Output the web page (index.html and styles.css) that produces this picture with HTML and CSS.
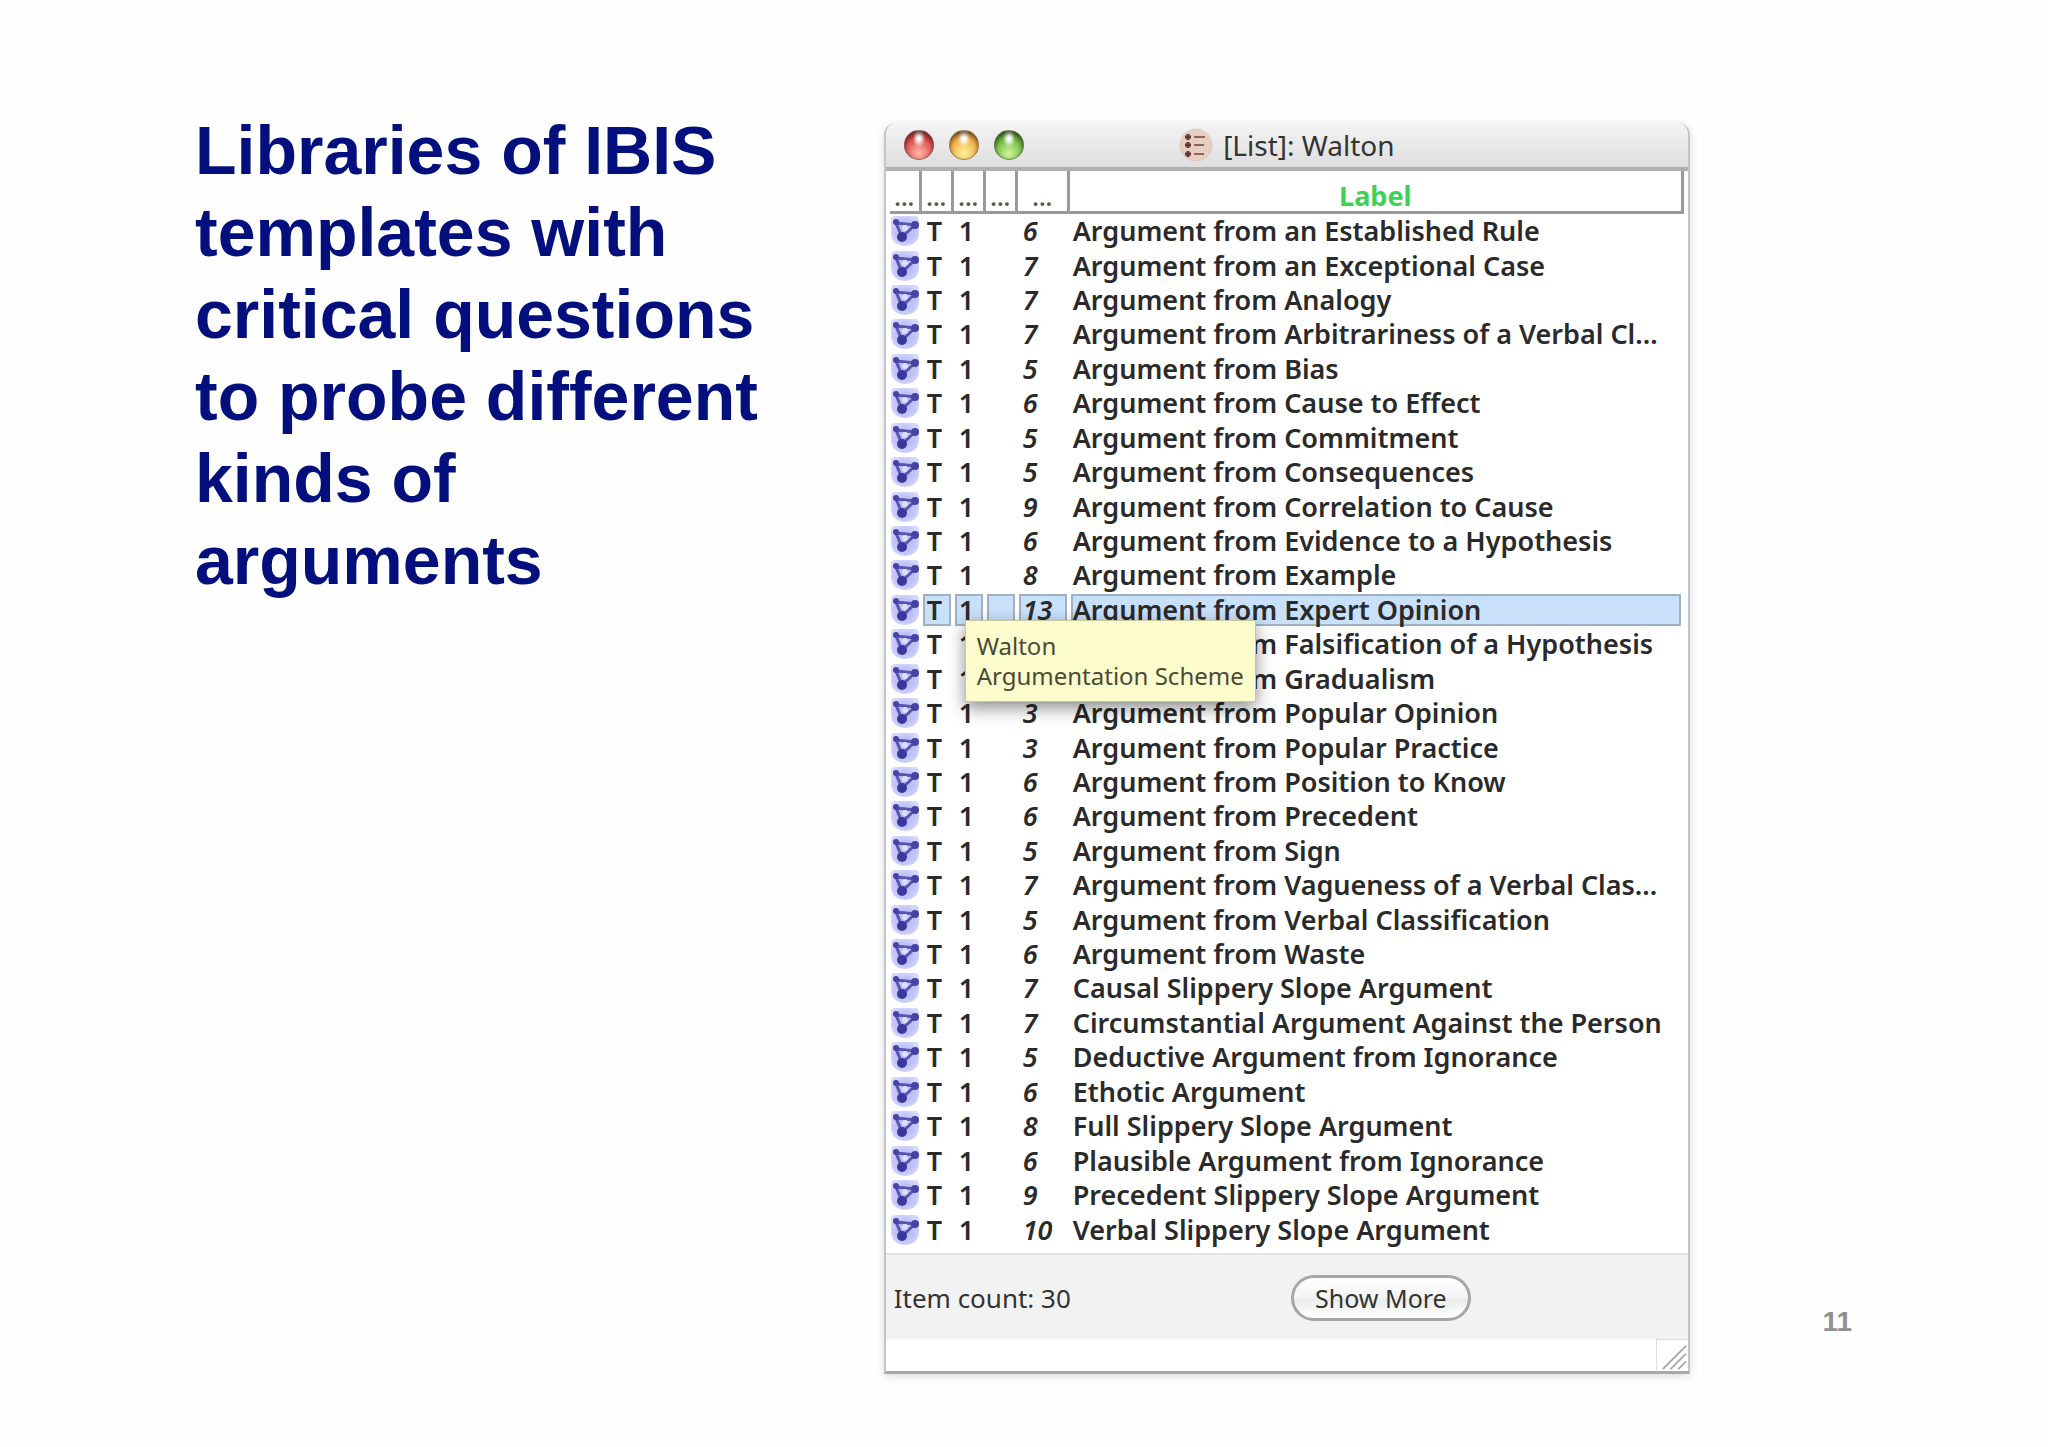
FILE: index.html
```
<!DOCTYPE html>
<html lang="en">
<head>
    <meta charset="UTF-8">
    <meta name="viewport" content="width=device-width, initial-scale=1.0">
    <title>Libraries of IBIS templates</title>
    <link rel="stylesheet" href="styles.css">
</head>
<body>

<svg class="defs" aria-hidden="true">
    <defs>
        <radialGradient id="bubble" cx="50%" cy="50%" r="55%">
            <stop offset="0" stop-color="#b4b4f0"/>
            <stop offset="0.7" stop-color="#c3c5fa"/>
            <stop offset="1" stop-color="#d4d8fc"/>
        </radialGradient>
    </defs>
    <symbol id="map" viewBox="0 0 30 32">
        <path d="M5 1 H25 Q29 1 29 6 V18 C29 26 23 31 15 31 C7 31 1 26 1 18 V6 Q1 1 5 1 Z" fill="url(#bubble)"/>
        <path d="M6 8 L25 10 L12 22 Z" fill="none" stroke="#5656b0" stroke-width="3"/>
        <circle cx="6" cy="7" r="3" fill="#4444a4"/>
        <circle cx="25" cy="10" r="4" fill="#4444a4"/>
        <circle cx="12" cy="22" r="5" fill="#38389e"/>
        <circle cx="15" cy="13" r="3" fill="#dcdefc"/>
    </symbol>
</svg>

<main class="slide">
    <h1>Libraries of IBIS templates with critical questions to probe different kinds of arguments</h1>

    <section class="window">
        <header class="titlebar">
            <div class="lights">
                <button class="light red" aria-label="Close"></button>
                <button class="light yellow" aria-label="Minimize"></button>
                <button class="light green" aria-label="Zoom"></button>
            </div>
            <div class="title">
                <svg class="list-icon" viewBox="0 0 34 34" aria-hidden="true">
                    <circle cx="17" cy="17" r="16" fill="#e8cdc1" stroke="#dcc8be"/>
                    <path d="M15 9h11M15 17h10M15 26h10" stroke="#8a6659" stroke-width="2"/>
                    <path d="M6 9h6M6 17h6M6 26h6" stroke="#5e3c34" stroke-width="3"/>
                    <path d="M9 6v6M9 14v6M9 23v6" stroke="#5e3c34" stroke-width="3"/>
                </svg>
                <span>[List]: Walton</span>
            </div>
        </header>

        <table class="list">
            <colgroup>
                <col class="narrow"><col class="narrow"><col class="narrow"><col class="narrow"><col class="count"><col>
            </colgroup>
            <thead>
                <tr><th>...</th><th>...</th><th>...</th><th>...</th><th>...</th><th class="label">Label</th></tr>
            </thead>
            <tbody>
                <tr><td><svg><use href="#map"/></svg></td><td>T</td><td>1</td><td></td><td>6</td><td>Argument from an Established Rule</td></tr>
                <tr><td><svg><use href="#map"/></svg></td><td>T</td><td>1</td><td></td><td>7</td><td>Argument from an Exceptional Case</td></tr>
                <tr><td><svg><use href="#map"/></svg></td><td>T</td><td>1</td><td></td><td>7</td><td>Argument from Analogy</td></tr>
                <tr><td><svg><use href="#map"/></svg></td><td>T</td><td>1</td><td></td><td>7</td><td>Argument from Arbitrariness of a Verbal Cl...</td></tr>
                <tr><td><svg><use href="#map"/></svg></td><td>T</td><td>1</td><td></td><td>5</td><td>Argument from Bias</td></tr>
                <tr><td><svg><use href="#map"/></svg></td><td>T</td><td>1</td><td></td><td>6</td><td>Argument from Cause to Effect</td></tr>
                <tr><td><svg><use href="#map"/></svg></td><td>T</td><td>1</td><td></td><td>5</td><td>Argument from Commitment</td></tr>
                <tr><td><svg><use href="#map"/></svg></td><td>T</td><td>1</td><td></td><td>5</td><td>Argument from Consequences</td></tr>
                <tr><td><svg><use href="#map"/></svg></td><td>T</td><td>1</td><td></td><td>9</td><td>Argument from Correlation to Cause</td></tr>
                <tr><td><svg><use href="#map"/></svg></td><td>T</td><td>1</td><td></td><td>6</td><td>Argument from Evidence to a Hypothesis</td></tr>
                <tr><td><svg><use href="#map"/></svg></td><td>T</td><td>1</td><td></td><td>8</td><td>Argument from Example</td></tr>
                <tr class="selected"><td><svg><use href="#map"/></svg></td><td>T</td><td class="anchor">1<div class="tooltip" role="tooltip">Walton<br>Argumentation Scheme</div></td><td></td><td>13</td><td>Argument from Expert Opinion</td></tr>
                <tr><td><svg><use href="#map"/></svg></td><td>T</td><td>1</td><td></td><td></td><td>Argument from Falsification of a Hypothesis</td></tr>
                <tr><td><svg><use href="#map"/></svg></td><td>T</td><td>1</td><td></td><td></td><td>Argument from Gradualism</td></tr>
                <tr><td><svg><use href="#map"/></svg></td><td>T</td><td>1</td><td></td><td>3</td><td>Argument from Popular Opinion</td></tr>
                <tr><td><svg><use href="#map"/></svg></td><td>T</td><td>1</td><td></td><td>3</td><td>Argument from Popular Practice</td></tr>
                <tr><td><svg><use href="#map"/></svg></td><td>T</td><td>1</td><td></td><td>6</td><td>Argument from Position to Know</td></tr>
                <tr><td><svg><use href="#map"/></svg></td><td>T</td><td>1</td><td></td><td>6</td><td>Argument from Precedent</td></tr>
                <tr><td><svg><use href="#map"/></svg></td><td>T</td><td>1</td><td></td><td>5</td><td>Argument from Sign</td></tr>
                <tr><td><svg><use href="#map"/></svg></td><td>T</td><td>1</td><td></td><td>7</td><td>Argument from Vagueness of a Verbal Clas...</td></tr>
                <tr><td><svg><use href="#map"/></svg></td><td>T</td><td>1</td><td></td><td>5</td><td>Argument from Verbal Classification</td></tr>
                <tr><td><svg><use href="#map"/></svg></td><td>T</td><td>1</td><td></td><td>6</td><td>Argument from Waste</td></tr>
                <tr><td><svg><use href="#map"/></svg></td><td>T</td><td>1</td><td></td><td>7</td><td>Causal Slippery Slope Argument</td></tr>
                <tr><td><svg><use href="#map"/></svg></td><td>T</td><td>1</td><td></td><td>7</td><td>Circumstantial Argument Against the Person</td></tr>
                <tr><td><svg><use href="#map"/></svg></td><td>T</td><td>1</td><td></td><td>5</td><td>Deductive Argument from Ignorance</td></tr>
                <tr><td><svg><use href="#map"/></svg></td><td>T</td><td>1</td><td></td><td>6</td><td>Ethotic Argument</td></tr>
                <tr><td><svg><use href="#map"/></svg></td><td>T</td><td>1</td><td></td><td>8</td><td>Full Slippery Slope Argument</td></tr>
                <tr><td><svg><use href="#map"/></svg></td><td>T</td><td>1</td><td></td><td>6</td><td>Plausible Argument from Ignorance</td></tr>
                <tr><td><svg><use href="#map"/></svg></td><td>T</td><td>1</td><td></td><td>9</td><td>Precedent Slippery Slope Argument</td></tr>
                <tr><td><svg><use href="#map"/></svg></td><td>T</td><td>1</td><td></td><td>10</td><td>Verbal Slippery Slope Argument</td></tr>
            </tbody>
        </table>

        <div class="toolbar">
            <span>Item count: 30</span>
            <button class="more">Show More</button>
        </div>
        <footer class="status">
            <svg class="grip" viewBox="0 0 32 32" aria-hidden="true">
                <path d="M6 30 L30 6 M14 30 L30 14 M22 30 L30 22" stroke="#a8a8a8" stroke-width="2"/>
            </svg>
        </footer>
    </section>

    <div class="page-number">11</div>
</main>

</body>
</html>
```
FILE: styles.css
```
body {
    margin: 0;
    background: #fefefe;
    font-family: "Noto Sans", "Open Sans", sans-serif;
    color: #2a2a2a;
}
.defs {
    position: absolute;
    width: 0;
    height: 0;
}
.slide {
    display: grid;
    grid-template-columns: 3fr 4fr 78px;
    column-gap: 84px;
    padding: 109px 196px 75px 195px;
}
h1 {
    margin: 0;
    font: bold 68px/82px "Liberation Sans", Arial, sans-serif;
    color: #020f7c;
}
.window {
    margin-top: 14px;
    background: #fff;
    border: 2px solid #c4c4c8;
    border-top: 0;
    border-bottom: 3px solid #a9a9ad;
    border-radius: 12px 12px 0 0;
    box-shadow: 0 2px 8px rgba(0, 0, 0, 0.14);
}
.titlebar {
    display: grid;
    grid-template-columns: 1fr auto 1fr;
    align-items: center;
    height: 44px;
    padding: 0 18px;
    border-bottom: 4px solid #b0b0b0;
    border-radius: 12px 12px 0 0;
    background: linear-gradient(#f4f4f4, #dedede);
}
.lights {
    display: flex;
    gap: 15px;
}
.light {
    width: 30px;
    height: 30px;
    padding: 0;
    border: 1px solid rgba(70, 60, 60, 0.5);
    border-radius: 50%;
    box-shadow: inset 0 3px 4px rgba(40, 30, 30, 0.6);
}
.red {
    background: radial-gradient(ellipse at 50% 24%, #fff 8%, transparent 32%), radial-gradient(circle at 50% 80%, #ffb9ae, #d8423f 65%, #9c3a38);
}
.yellow {
    background: radial-gradient(ellipse at 50% 24%, #fff 8%, transparent 32%), radial-gradient(circle at 50% 80%, #fff29a, #f0a53a 65%, #a8702c);
}
.green {
    background: radial-gradient(ellipse at 50% 24%, #fff 8%, transparent 32%), radial-gradient(circle at 50% 80%, #d5f59a, #62ae36 65%, #3e7028);
}
.title {
    display: flex;
    align-items: center;
    gap: 10px;
    font-size: 28px;
    line-height: 36px;
    color: #333;
}
.list-icon {
    width: 34px;
    height: 34px;
}
.list {
    width: 100%;
    height: 1082px;
    padding: 0 4px 6px;
    border-collapse: separate;
    border-spacing: 0;
    table-layout: fixed;
    font-size: 27px;
    font-weight: 600;
    line-height: 30px;
}
.narrow {
    width: 32px;
}
.count {
    width: 52px;
}
.list th {
    height: 40px;
    padding: 0;
    border-right: 3px solid #999;
    border-bottom: 3px solid #999;
    font-size: 24px;
    font-weight: 600;
    line-height: 28px;
    vertical-align: bottom;
    color: #555;
}
.list th.label {
    font-size: 27px;
    font-weight: 700;
    line-height: 30px;
    color: #3fd058;
}
.list td {
    padding: 0 0 0 4px;
    border: 1px solid transparent;
    border-right-width: 3px;
    background-clip: padding-box;
    white-space: nowrap;
}
.list td:nth-child(1) {
    padding: 0;
    border-width: 1px 0;
}
.list td:nth-child(5) {
    font-style: italic;
}
.list td:nth-child(6) {
    padding-left: 2px;
}
.list td svg {
    display: block;
    width: 30px;
    height: 32px;
}
.selected td:not(:first-child) {
    background-color: #c8e0fa;
    box-shadow: inset 0 0 0 2px #9fb2c4;
}
.anchor {
    position: relative;
}
.tooltip {
    position: absolute;
    z-index: 1;
    top: 26px;
    left: 10px;
    padding: 10px 11px;
    border: 1px solid #c9c79c;
    background: #fdfccd;
    box-shadow: 0 6px 16px rgba(0, 0, 0, 0.45);
    font-size: 24px;
    font-weight: 400;
    color: #4a4a35;
}
.toolbar {
    display: grid;
    grid-template-columns: 1fr auto 1fr;
    align-items: center;
    height: 82px;
    padding: 2px 8px 0;
    border-top: 2px solid #e2e2e2;
    background: #f2f2f3;
    font-size: 26px;
    color: #333;
}
.more {
    width: 180px;
    height: 46px;
    margin-left: 188px;
    border: 3px solid #a6a6a8;
    border-radius: 23px;
    background: linear-gradient(#fff, #f4f4f4 50%, #e9ecec 52%, #fff);
    font: 25px "Noto Sans", "Open Sans", sans-serif;
    color: #333;
}
.status {
    display: flex;
    justify-content: flex-end;
    height: 32px;
}
.grip {
    width: 31px;
    border-top: 1px solid #ddd;
    border-left: 1px solid #ddd;
}
.page-number {
    align-self: end;
    margin-bottom: 36px;
    font: bold 28px/32px "Liberation Sans", Arial, sans-serif;
    text-align: right;
    color: #909092;
}
```
